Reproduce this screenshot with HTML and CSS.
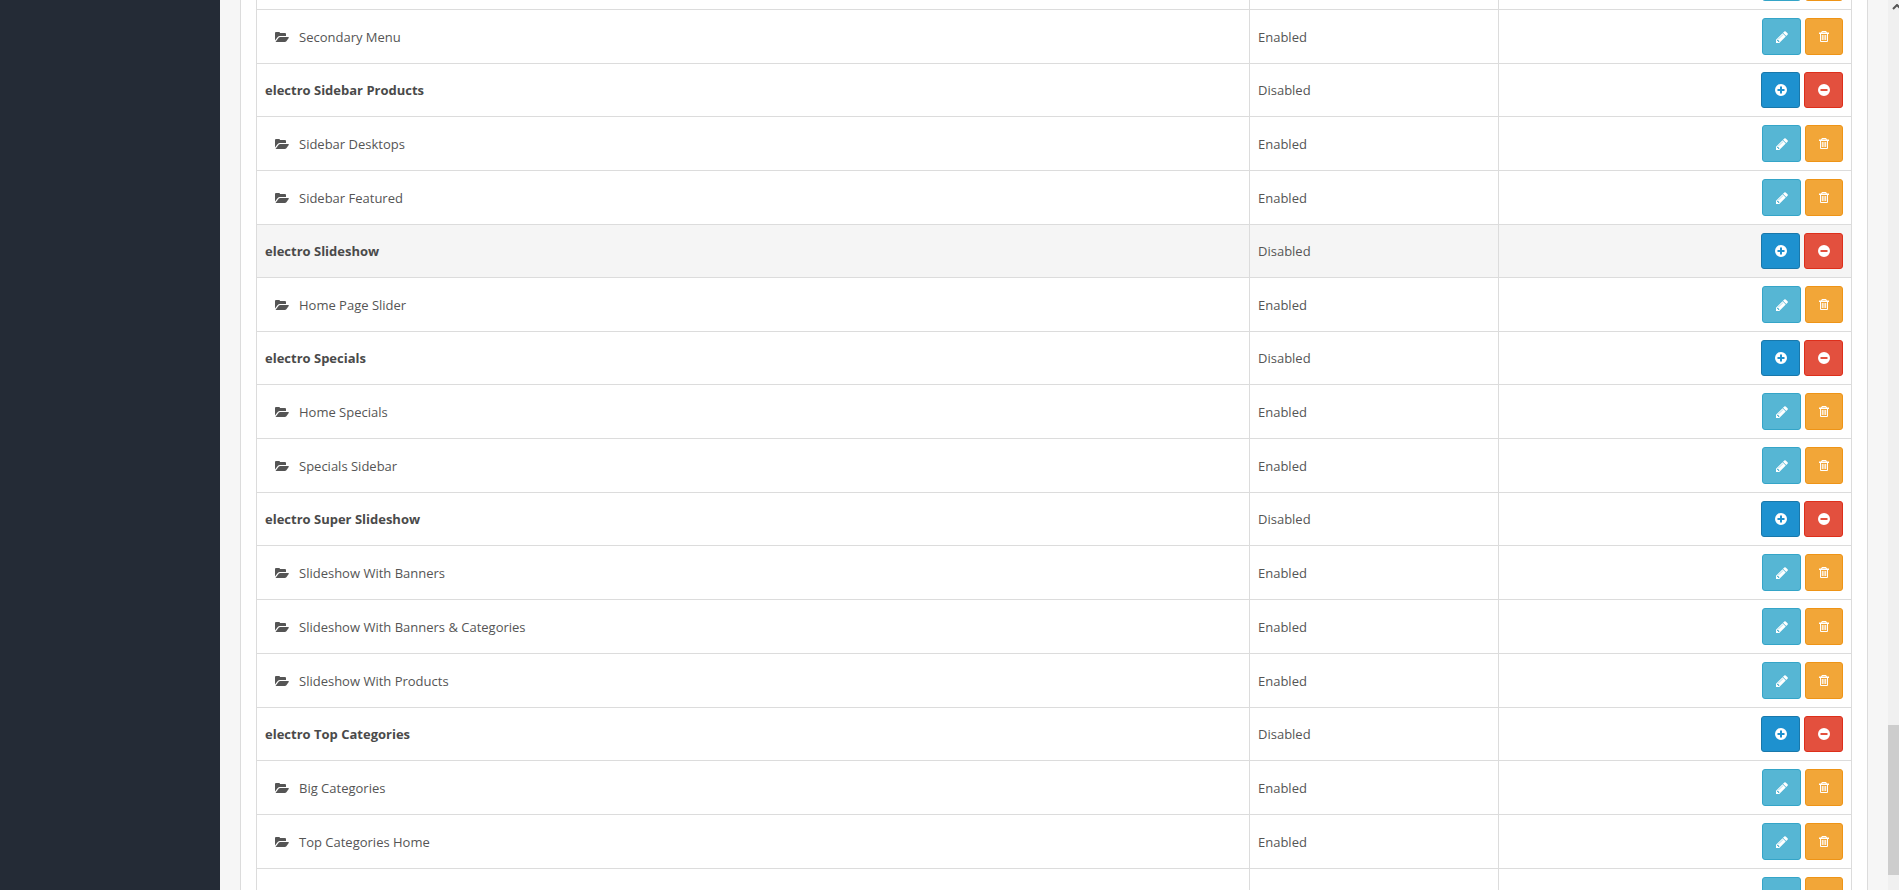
FILE: index.html
```
<!DOCTYPE html>
<html lang="en">
  <head>
    <meta charset="UTF-8" />
    <meta name="viewport" content="width=device-width, initial-scale=1.0" />
    <title>Modules</title>
    <link rel="stylesheet" href="styles.css" />
  </head>
  <body>
    <!-- icons -->
    <svg class="sprite" aria-hidden="true">
      <symbol id="folder" viewBox="0 0 14 12">
        <path d="M0 10V2Q0 1 1 1H4Q5 1 5 2H10Q11 2 11 3V5H5Q3.500 5 2.500 6.200L0 9.500Z" />
        <path d="M0.500 11L3.600 6.800Q4.200 6 5.200 6H13.200Q14.300 6 13.700 7L11.400 10.200Q10.800 11 9.800 11Z" />
      </symbol>
      <symbol id="pencil" viewBox="0 0 1536 1536">
        <path d="M363 1408l91-91-235-235-91 91v107h128v128h107zM886 480q0-22-22-22-10 0-17 7l-542 542q-7 7-7 17 0 22 22 22 10 0 17-7l542-542q7-7 7-17zM832 288l416 416-832 832H0v-416zM1515 384q0 53-37 90l-166 166-416-416 166-165q36-38 90-38 53 0 91 38l235 234q37 39 37 91z" />
      </symbol>
      <symbol id="trash" viewBox="0 0 10 11">
        <path fill-rule="evenodd" d="M3 0H7L8 1.500H10V3H9V10Q9 11 8 11H2Q1 11 1 10V3H0V1.500H2ZM3.500 1L3.200 1.500H6.800L6.500 1ZM2 3V10H8V3Z" />
        <path d="M2.800 4H3.800V9H2.800ZM4.500 4H5.500V9H4.500ZM6.200 4H7.200V9H6.200Z" />
      </symbol>
      <symbol id="plus" viewBox="0 0 12 12">
        <path fill-rule="evenodd" d="M6 0a6 6 0 1 1 0 12a6 6 0 1 1 0-12zM5 2.500V5H2.500V7H5V9.500H7V7H9.500V5H7V2.500z" />
      </symbol>
      <symbol id="minus" viewBox="0 0 12 12">
        <path fill-rule="evenodd" d="M6 0a6 6 0 1 1 0 12a6 6 0 1 1 0-12zM2.500 5V7H9.500V5z" />
      </symbol>
    </svg>

    <div class="column-left"></div>

    <!-- module list -->
    <main class="content">
      <div class="panel">
        <table class="modules">
          <colgroup>
            <col />
            <col class="col-status" />
            <col class="col-action" />
          </colgroup>
          <tbody id="module-list"></tbody>
        </table>
      </div>
    </main>

    <!-- scroll track -->
    <div class="scroll">
      <svg class="scroll-arrow" viewBox="0 0 10 6" aria-hidden="true"><path d="M1 5L5 1L9 5" /></svg>
      <div class="scroll-thumb"></div>
    </div>

    <script>
      // group: true is an extension, the others are its modules
      const modules = [
        { name: "Primary Menu" },
        { name: "Secondary Menu" },
        { name: "electro Sidebar Products", group: true },
        { name: "Sidebar Desktops" },
        { name: "Sidebar Featured" },
        { name: "electro Slideshow", group: true, active: true },
        { name: "Home Page Slider" },
        { name: "electro Specials", group: true },
        { name: "Home Specials" },
        { name: "Specials Sidebar" },
        { name: "electro Super Slideshow", group: true },
        { name: "Slideshow With Banners" },
        { name: "Slideshow With Banners &amp; Categories" },
        { name: "Slideshow With Products" },
        { name: "electro Top Categories", group: true },
        { name: "Big Categories" },
        { name: "Top Categories Home" },
        { name: "Week Categories" },
      ];

      function icon(name) {
        return `<svg class="icon icon-${name}" aria-hidden="true"><use href="#${name}"></use></svg>`;
      }

      function button(color, name, label) {
        return `<button type="button" class="btn btn-${color}" aria-label="${label}">${icon(name)}</button>`;
      }

      let str = "";
      for (const item of modules) {
        if (item.group) {
          str += `<tr class="group${item.active ? " active" : ""}">
            <td><b>${item.name}</b></td>
            <td>Disabled</td>
            <td><div class="actions">${button("primary", "plus", "Install")}${button("danger", "minus", "Uninstall")}</div></td>
          </tr>`;
        } else {
          str += `<tr>
            <td><div class="module">${icon("folder")}${item.name}</div></td>
            <td>Enabled</td>
            <td><div class="actions">${button("info", "pencil", "Edit")}${button("warning", "trash", "Delete")}</div></td>
          </tr>`;
        }
      }
      document.querySelector("#module-list").innerHTML = str;
    </script>
  </body>
</html>
```
FILE: styles.css
```
* {
  box-sizing: border-box;
}
body {
  margin: 0;
  height: 100vh;
  overflow: hidden;
  display: flex;
  background-color: #f6f6f6;
  color: #555;
  font-family: "Open Sans", "Noto Sans", sans-serif;
  font-size: 13px;
  line-height: 20px;
}
.sprite {
  display: none;
}
.column-left {
  width: 220px;
  flex-shrink: 0;
  background-color: #242b36;
}

/* content */
.content {
  flex: 1;
  min-width: 0;
  padding: 0 20px;
}
.panel {
  background-color: #fff;
  border: 1px solid #dcdcdc;
  border-width: 0 1px;
  padding: 0 15px;
  /* list is scrolled part way through a row */
  margin-top: -45px;
}
.modules {
  width: 100%;
  table-layout: fixed;
  border-collapse: collapse;
}
.col-status {
  width: 249px;
}
.col-action {
  width: 353px;
}
.modules td {
  height: 54px;
  padding: 0 8px;
  border: 1px solid #dcdcdc;
  vertical-align: middle;
}
.modules .group td {
  height: 53px;
}
.modules .active td {
  background-color: #f5f5f5;
}
.modules b {
  color: #4a4a4a;
}
.module {
  display: flex;
  align-items: center;
  gap: 10px;
  padding-left: 10px;
}

/* buttons */
.actions {
  display: flex;
  justify-content: flex-end;
  gap: 4px;
}
.btn {
  width: 39px;
  height: 37px;
  padding: 0;
  border: 1px solid;
  border-radius: 3px;
  display: flex;
  align-items: center;
  justify-content: center;
  color: #fff;
  cursor: pointer;
}
.group .btn {
  height: 36px;
}
.btn-primary {
  background-color: #1e91cf;
  border-color: #1978ab;
}
.btn-danger {
  background-color: #e3503e;
  border-color: #dd2f1b;
}
.btn-info {
  background-color: #56b6d4;
  border-color: #35a5c8;
}
.btn-warning {
  width: 38px;
  background-color: #f2a638;
  border-color: #ee9417;
}

.icon {
  width: 12px;
  height: 12px;
  fill: currentColor;
}
.icon-folder {
  width: 14px;
  height: 12px;
}
.icon-trash {
  width: 10px;
  height: 11px;
}

/* scroll track */
.scroll {
  width: 11px;
  flex-shrink: 0;
  display: flex;
  flex-direction: column;
  background-color: #f0f0f0;
  overflow: hidden;
}
.scroll-arrow {
  width: 10px;
  height: 6px;
  margin: 4px 0 0 4px;
  flex-shrink: 0;
  fill: none;
  stroke: #555;
  stroke-width: 2;
}
.scroll-thumb {
  height: 150px;
  margin-top: auto;
  margin-bottom: 15px;
  background-color: #cdcdcd;
}
```
